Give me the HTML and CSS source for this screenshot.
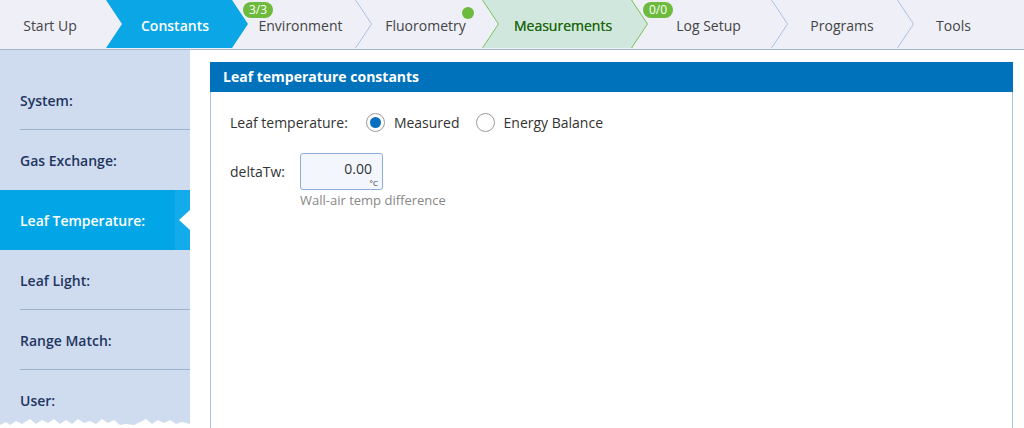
FILE: index.html
```html
<!DOCTYPE html>
<html lang="en">
<head>
    <meta charset="UTF-8">
    <meta name="viewport" content="width=device-width, initial-scale=1.0">
    <title>Constants - Leaf Temperature</title>
    <link rel="stylesheet" href="styles.css">
</head>
<body>
    <nav class="steps">
        <div class="step step-first">Start Up</div>
        <div class="step step-active">Constants</div>
        <div class="step">
            <span class="badge">3/3</span>
            Environment
            <svg class="sep" width="18" height="48"><polyline points="0.5,0 16.5,24 0.5,48" /></svg>
        </div>
        <div class="step">
            <span class="dot"></span>
            Fluorometry
        </div>
        <div class="step step-done">
            <svg class="done-bg" width="166" height="48">
                <polygon points="0,0 150,0 166,24 150,48 0,48 16,24" />
                <polyline points="0.5,0 16.5,24 0.5,48" />
                <polyline points="149.5,0 165.5,24 149.5,48" />
            </svg>
            <span class="step-label">Measurements</span>
        </div>
        <div class="step">
            <span class="badge">0/0</span>
            Log Setup
            <svg class="sep" width="18" height="48"><polyline points="0.5,0 16.5,24 0.5,48" /></svg>
        </div>
        <div class="step">
            Programs
            <svg class="sep" width="18" height="48"><polyline points="0.5,0 16.5,24 0.5,48" /></svg>
        </div>
        <div class="step step-last">Tools</div>
    </nav>

    <div class="page">
        <aside class="side">
            <div class="side-item lined">System:</div>
            <div class="side-item">Gas Exchange:</div>
            <div class="side-item active">Leaf Temperature:</div>
            <div class="side-item lined">Leaf Light:</div>
            <div class="side-item lined">Range Match:</div>
            <div class="side-item">User:</div>
            <svg class="torn" width="190" height="12" viewBox="0 0 190 12">
                <polygon points="0,12 0,9 6,6 10,9 16,5 22,8 30,3 36,8 42,4 48,7 54,3 60,8 66,4 72,8 78,3 84,7 90,5 96,8 102,3 108,7 114,4 120,9 126,8 134,9 140,6 146,3 152,8 158,4 164,7 170,4 176,8 182,6 190,8 190,12" />
            </svg>
        </aside>

        <main class="main">
            <section class="panel">
                <h2 class="panel-title">Leaf temperature constants</h2>
                <div class="panel-body">
                    <div class="row">
                        <span class="label">Leaf temperature:</span>
                        <label class="radio">
                            <span class="radio-circle checked"></span>
                            Measured
                        </label>
                        <label class="radio">
                            <span class="radio-circle"></span>
                            Energy Balance
                        </label>
                    </div>

                    <div class="row row-field">
                        <span class="label">deltaTw:</span>
                        <div class="field">
                            <div class="num-box">
                                <div class="num-value">0.00</div>
                                <div class="num-unit">°C</div>
                            </div>
                            <div class="hint">Wall-air temp difference</div>
                        </div>
                    </div>
                </div>
            </section>
        </main>
    </div>
</body>
</html>
```

FILE: styles.css
```css
body {
    margin: 0;
    overflow: hidden;
    font-family: "Open Sans", "Noto Sans", sans-serif;
    background-color: white;
    color: #333;
}
.steps {
    display: flex;
    height: 49px;
    background-color: #eeeff7;
    border-bottom: 1px solid #a3b6cd;
}
.step {
    position: relative;
    flex: none;
    margin-left: -16px;
    padding-right: 4px;
    box-sizing: border-box;
    line-height: 51px;
    text-align: center;
    font-size: 14px;
    color: #444;
    white-space: nowrap;
}
.step:nth-child(1) { width: 122px; margin-left: 0; padding-right: 22px; }
.step:nth-child(2) { width: 142px; }
.step:nth-child(3) { width: 141px; }
.step:nth-child(4) { width: 141px; }
.step:nth-child(5) { width: 166px; }
.step:nth-child(6) { width: 157px; }
.step:nth-child(7) { width: 142px; }
.step:nth-child(8) { width: 125px; padding-right: 16px; }
.step-active {
    height: 48px;
    background-color: #0aa6e5;
    color: white;
    font-weight: 600;
    clip-path: polygon(0 0, calc(100% - 16px) 0, 100% 50%, calc(100% - 16px) 100%, 0 100%, 16px 50%);
}
.step-done {
    color: #21680f;
    text-shadow: 0 0 0.4px #21680f;
}
.step-label {
    position: relative;
}
.done-bg {
    position: absolute;
    left: 0;
    top: 0;
}
.done-bg polygon {
    fill: #cfe7dd;
}
.done-bg polyline {
    fill: none;
    stroke: #7fc25c;
    stroke-width: 1;
}
.sep {
    position: absolute;
    right: 0;
    top: 0;
}
.sep polyline {
    fill: none;
    stroke: #a9c4e3;
    stroke-width: 1;
}
.badge {
    position: absolute;
    left: 11px;
    top: 2px;
    width: 30px;
    height: 16px;
    border-radius: 8px;
    background-color: #6cbb3c;
    color: white;
    font-size: 12px;
    line-height: 16px;
    text-align: center;
    z-index: 1;
}
.dot {
    position: absolute;
    right: 24px;
    top: 7px;
    width: 12px;
    height: 12px;
    border-radius: 50%;
    background-color: #6cbb3c;
}
.page {
    display: flex;
    height: 378px;
}
.side {
    position: relative;
    flex: none;
    width: 190px;
    padding-top: 20px;
    background-color: #cfdcef;
    overflow: hidden;
}
.side-item {
    position: relative;
    height: 60px;
    padding-left: 20px;
    display: flex;
    align-items: center;
    font-size: 14px;
    font-weight: 600;
    color: #1f3560;
}
.side-item.lined {
    background: linear-gradient(#9fb2cc, #9fb2cc) no-repeat 20px 100% / calc(100% - 20px) 1px;
}
.side-item.active {
    background: linear-gradient(90deg, #02a6e7 0 175px, #14abea 175px);
    color: white;
}
.side-item.active::after {
    content: "";
    position: absolute;
    right: 0;
    top: 50%;
    margin-top: -10px;
    border-style: solid;
    border-width: 10px 11px 10px 0;
    border-color: transparent white transparent transparent;
}
.torn {
    position: absolute;
    left: 0;
    bottom: 0;
}
.torn polygon {
    fill: white;
}
.main {
    flex: 1;
    padding: 12px 11px 0 20px;
}
.panel {
    height: 400px;
    border: 1px solid #a9c5e6;
    border-top: none;
}
.panel-title {
    margin: 0 -1px;
    height: 30px;
    padding-left: 13px;
    background-color: #0072bb;
    color: white;
    font-size: 14px;
    font-weight: 700;
    line-height: 30px;
}
.panel-body {
    padding: 21px 19px;
}
.row {
    display: flex;
    align-items: center;
    font-size: 14px;
    color: #333;
}
.row .label {
    margin-right: 18px;
}
.radio {
    display: flex;
    align-items: center;
    gap: 9px;
    margin-right: 16px;
}
.radio-circle {
    box-sizing: border-box;
    width: 19px;
    height: 19px;
    border: 1px solid #9a9a9a;
    border-radius: 50%;
    background-color: white;
    display: flex;
    align-items: center;
    justify-content: center;
}
.radio-circle.checked::after {
    content: "";
    width: 11px;
    height: 11px;
    border-radius: 50%;
    background-color: #0a6fc0;
}
.row-field {
    margin-top: 21px;
    align-items: flex-start;
}
.row-field .label {
    margin-top: 9px;
    margin-right: 15px;
}
.num-box {
    box-sizing: border-box;
    width: 83px;
    height: 37px;
    border: 1px solid #8aaed8;
    border-radius: 3px;
    background-color: #f4f6fd;
    padding: 6px 4px 0 0;
    text-align: right;
}
.num-value {
    font-size: 14px;
    line-height: 18px;
    padding-right: 6px;
}
.num-unit {
    font-size: 8px;
    line-height: 10px;
    color: #333;
}
.hint {
    margin-top: 1px;
    font-size: 13px;
    line-height: 18px;
    color: #888;
}
```
